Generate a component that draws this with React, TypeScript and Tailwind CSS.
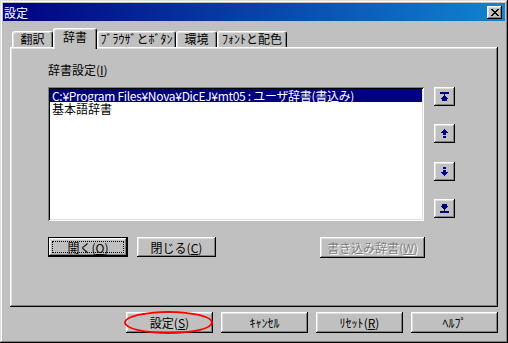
import React from "react";

const raised =
  "bg-[#c0c0c0] shadow-[inset_-1px_-1px_#000,inset_1px_1px_#fff,inset_-2px_-2px_#808080,inset_2px_2px_#dfdfdf]";

function Mn({ k }: { k: string }) {
  return (
    <span>
      (<span className="underline underline-offset-1">{k}</span>)
    </span>
  );
}

function Pixels({ rows, w, h }: { rows: string[]; w: number; h: number }) {
  return (
    <svg width={w} height={h} viewBox={`0 0 ${w} ${h}`} shapeRendering="crispEdges">
      {rows.map((row, y) =>
        row.split("").map((c, x) =>
          c === "#" ? <rect key={`${x}-${y}`} x={x} y={y} width={1} height={1} fill="#000080" /> : null
        )
      )}
    </svg>
  );
}

const iconTop = [
  "#########",
  "#########",
  "....#....",
  "....#....",
  "...###...",
  "..#####..",
  ".#######.",
  "..#####..",
  "..#####..",
];
const iconUp = [
  "...#...",
  "..###..",
  ".#####.",
  "#######",
  "..###..",
  "..###..",
  ".......",
  "..###..",
  "..###..",
];
const iconDown = [...iconUp].reverse();
const iconBottom = [...iconTop].reverse();

function CloseGlyph() {
  const rows = ["##....##", ".##..##.", "..####..", "...##...", "..####..", ".##..##.", "##....##"];
  return (
    <svg width={8} height={7} viewBox="0 0 8 7" shapeRendering="crispEdges">
      {rows.map((row, y) =>
        row.split("").map((c, x) =>
          c === "#" ? <rect key={`${x}-${y}`} x={x} y={y} width={1} height={1} fill="#000" /> : null
        )
      )}
    </svg>
  );
}

function Tab({ label, width, active }: { label: string; width: string; active?: boolean }) {
  return (
    <div
      className={`${width} ${
        active ? "h-[21px] -mb-[2px] pt-[1px]" : "h-[16px]"
      } bg-[#c0c0c0] border-l border-t border-r border-l-white border-t-white border-r-black rounded-t-[3px] shadow-[inset_-1px_0_#808080,inset_1px_1px_#dfdfdf] flex justify-center items-start leading-[14px] whitespace-nowrap`}
    >
      {label}
    </div>
  );
}

export default function App() {
  return (
    <div className="w-[508px] h-[343px] bg-[#c0c0c0] shadow-[inset_-1px_-1px_#000,inset_1px_1px_#dfdfdf,inset_-2px_-2px_#808080,inset_2px_2px_#fff] p-[3px] flex flex-col text-[12px] leading-[13px] text-black font-['Noto_Sans_CJK_JP',sans-serif]">
      {/* title bar */}
      <div className="h-[18px] bg-[linear-gradient(to_right,#000080,#1084d0)] flex items-center justify-between pl-[1px] pr-[3px]">
        <span className="text-white">設定</span>
        <div className={`${raised} w-[15px] h-[13px] flex items-center justify-center`}>
          <CloseGlyph />
        </div>
      </div>

      <div className="flex flex-col px-[7px] pt-[7px]">
        {/* tabs */}
        <div className="relative z-10 flex items-end h-[19px] pl-[2px]">
          <Tab label="翻訳" width="w-[41px]" />
          <Tab label="辞書" width="w-[44px]" active />
          <Tab label="ﾌﾞﾗｳｻﾞとﾎﾞﾀﾝ" width="w-[79px]" />
          <Tab label="環境" width="w-[41px]" />
          <Tab label="ﾌｫﾝﾄと配色" width="w-[70px]" />
        </div>

        {/* panel */}
        <div className={`${raised} h-[260px] flex flex-col pl-[38px] pt-[16px]`}>
          <div className="h-[13px]">
            辞書設定<Mn k="I" />
          </div>

          <div className="flex mt-[11px]">
            <div className="w-[376px] h-[134px] bg-white shadow-[inset_1px_1px_#808080,inset_-1px_-1px_#fff,inset_2px_2px_#000,inset_-2px_-2px_#dfdfdf] p-[2px] flex flex-col">
              <div className="h-[13px] bg-[#000080] text-white pl-[2px] whitespace-nowrap tracking-[-0.3px]">
                C:¥Program Files¥Nova¥DicEJ¥mt05 : ユーザ辞書(書込み)
              </div>
              <div className="h-[13px] pl-[2px]">基本語辞書</div>
            </div>

            <div className="ml-[10px] h-[131px] flex flex-col justify-between">
              <div className={`${raised} w-[21px] h-[19px] flex items-center justify-center`}>
                <Pixels rows={iconTop} w={9} h={9} />
              </div>
              <div className={`${raised} w-[21px] h-[19px] flex items-center justify-center`}>
                <Pixels rows={iconUp} w={7} h={9} />
              </div>
              <div className={`${raised} w-[21px] h-[19px] flex items-center justify-center`}>
                <Pixels rows={iconDown} w={7} h={9} />
              </div>
              <div className={`${raised} w-[21px] h-[19px] flex items-center justify-center`}>
                <Pixels rows={iconBottom} w={9} h={9} />
              </div>
            </div>
          </div>

          <div className="flex mt-[16px] items-start">
            <div className="w-[80px] h-[20px] border border-black">
              <div className={`${raised} w-full h-full p-[3px]`}>
                <div className="w-full h-full border border-dotted border-black flex items-center justify-center">
                  開く<Mn k="O" />
                </div>
              </div>
            </div>
            <div className={`${raised} ml-[9px] w-[79px] h-[20px] flex items-center justify-center`}>
              閉じる<Mn k="C" />
            </div>
            <div
              className={`${raised} ml-[104px] w-[105px] h-[21px] flex items-center justify-center text-[#808080] [text-shadow:1px_1px_0_#fff]`}
            >
              書き込み辞書<Mn k="W" />
            </div>
          </div>
        </div>

        {/* bottom buttons */}
        <div className="flex justify-end gap-[8px] mt-[5px]">
          <div className="relative">
            <div className={`${raised} w-[87px] h-[21px] flex items-center justify-center`}>
              設定<Mn k="S" />
            </div>
            <div className="absolute -left-[2px] -top-[1px] w-[89px] h-[23px] rounded-[50%] border-2 border-[#ff0000] pointer-events-none" />
          </div>
          <div className={`${raised} w-[87px] h-[21px] flex items-center justify-center`}>ｷｬﾝｾﾙ</div>
          <div className={`${raised} w-[87px] h-[21px] flex items-center justify-center`}>
            ﾘｾｯﾄ<Mn k="R" />
          </div>
          <div className={`${raised} w-[87px] h-[21px] flex items-center justify-center`}>ﾍﾙﾌﾟ</div>
        </div>
      </div>
    </div>
  );
}
